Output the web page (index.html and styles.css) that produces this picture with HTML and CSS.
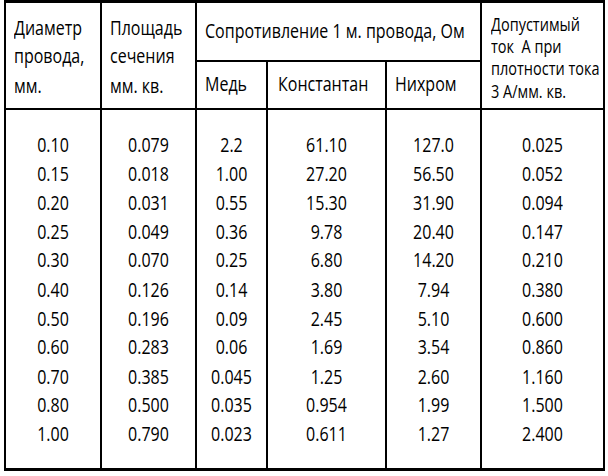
FILE: index.html
```html
<!DOCTYPE html>
<html lang="ru">
<head>
<meta charset="utf-8">
<link rel="stylesheet" href="styles.css">
</head>
<body>
<div class="tbl">
  <div class="cell head c1 tall"><span class="t lines">Диаметр<br>провода,<br>мм.</span></div>
  <div class="cell head c2 tall"><span class="t lines">Площадь<br>сечения<br>мм. кв.</span></div>
  <div class="cell head group"><span class="t lines">Сопротивление 1 м. провода, Ом</span></div>
  <div class="cell head c6 tall small"><span class="t small-lines">Допустимый<br>ток&nbsp; А при<br>плотности тока<br>3 А/мм. кв.</span></div>
  <div class="cell head c3 sub"><span class="t lines">Медь</span></div>
  <div class="cell head c4 sub wide"><span class="t lines">Константан</span></div>
  <div class="cell head c5 sub"><span class="t lines">Нихром</span></div>

  <div class="cell body c1"><span class="t data">0.10<br>0.15<br>0.20<br>0.25<br>0.30<br>0.40<br>0.50<br>0.60<br>0.70<br>0.80<br>1.00</span></div>
  <div class="cell body c2"><span class="t data">0.079<br>0.018<br>0.031<br>0.049<br>0.070<br>0.126<br>0.196<br>0.283<br>0.385<br>0.500<br>0.790</span></div>
  <div class="cell body c3"><span class="t data">2.2<br>1.00<br>0.55<br>0.36<br>0.25<br>0.14<br>0.09<br>0.06<br>0.045<br>0.035<br>0.023</span></div>
  <div class="cell body c4"><span class="t data">61.10<br>27.20<br>15.30<br>9.78<br>6.80<br>3.80<br>2.45<br>1.69<br>1.25<br>0.954<br>0.611</span></div>
  <div class="cell body c5"><span class="t data">127.0<br>56.50<br>31.90<br>20.40<br>14.20<br>7.94<br>5.10<br>3.54<br>2.60<br>1.99<br>1.27</span></div>
  <div class="cell body c6"><span class="t data">0.025<br>0.052<br>0.094<br>0.147<br>0.210<br>0.380<br>0.600<br>0.860<br>1.160<br>1.500<br>2.400</span></div>
</div>
</body>
</html>
```

FILE: styles.css
```css
html, body {
  margin: 0;
  padding: 0;
  background: #ffffff;
}

body {
  font-family: "Open Sans", "Noto Sans", sans-serif;
  color: #000;
  width: 608px;
  height: 476px;
  overflow: hidden;
}

.tbl {
  margin-left: 4px;
  width: 601px;
  box-sizing: border-box;
  display: grid;
  grid-template-columns: 94px 93px 69px 117px 93px 121px;
  grid-template-rows: 57px 46px 358px;
  gap: 2px;
  background: #000;
  border-style: solid;
  border-color: #000;
  border-width: 3px 2px 3px 2px;
}

.cell {
  background: #fff;
  display: flex;
  flex-direction: column;
  justify-content: center;
  align-items: flex-start;
  padding-left: 8px;
  font-size: 16px;
  box-sizing: border-box;
  min-width: 0;
}

.c1 { grid-column: 1; }
.c2 { grid-column: 2; }
.c3 { grid-column: 3; }
.c4 { grid-column: 4; }
.c5 { grid-column: 5; }
.c6 { grid-column: 6; }

.tall {
  grid-row: 1 / span 2;
  padding-top: 3px;
}
.group { grid-column: 3 / span 3; grid-row: 1; }
.sub { grid-row: 2; }
.wide { padding-left: 10px; }

.small {
  font-size: 14.5px;
  padding-left: 9px;
  padding-top: 4px;
}

.t {
  display: block;
  transform: scaleY(1.24);
  transform-origin: 50% 50%;
  white-space: nowrap;
}

.lines { line-height: 23.4px; }
.small-lines { line-height: 18px; }

.body {
  grid-row: 3;
  justify-content: flex-start;
  align-items: center;
  padding-left: 0;
  padding-top: 21px;
}

.data {
  line-height: 23.31px;
  text-align: center;
  transform-origin: 50% 0;
}
```
